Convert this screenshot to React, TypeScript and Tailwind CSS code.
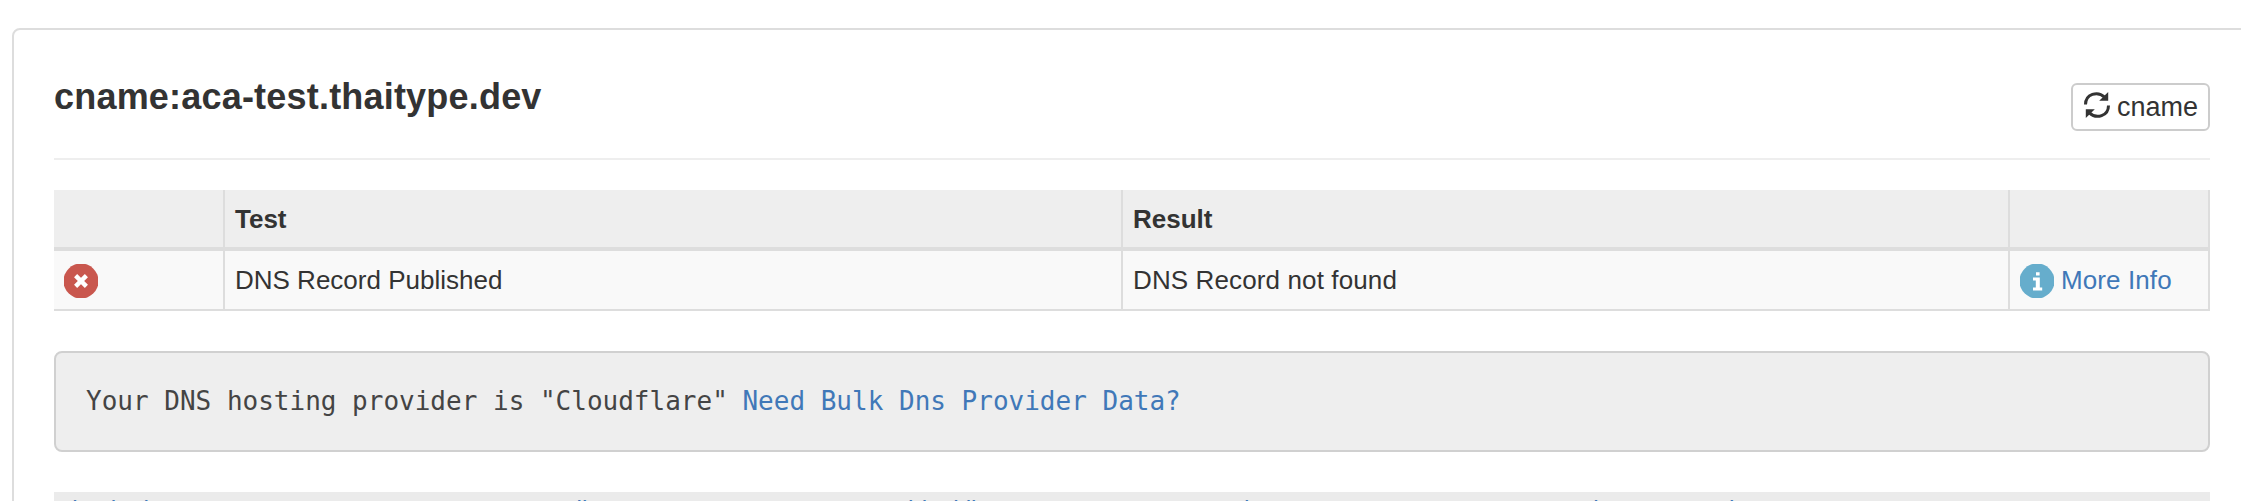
const headerCell = "border-r-2 border-b-4 border-[#ddd] bg-[#eee] pl-[10px] pt-px pb-0 text-left font-bold h-[61px]";
const bodyCell = "border-r-2 border-b-2 border-[#ddd] bg-[#f9f9f9] pl-[10px] h-[60px]";

function RefreshIcon() {
  return (
    <svg className="mb-[5px] h-[26px] w-[26px]" viewBox="0 0 26 26" fill="none">
      <path d="M1.5 12.6C1.5 2.2 13.5-1.6 20.6 5.2" stroke="#333" strokeWidth="3" />
      <path d="M24.5 13.4C24.5 23.8 12.5 27.6 5.4 20.8" stroke="#333" strokeWidth="3" />
      <path d="M24.2 0V8.8H15.2ZM1.8 26V17.2H10.8Z" fill="#333" />
    </svg>
  );
}

function ErrorIcon() {
  return (
    <svg className="relative top-px h-[34px] w-[34px]" viewBox="0 0 34 34">
      <circle cx="17" cy="17" r="17.5" fill="#c9574e" />
      <path d="M11.6 11.6L22.4 22.4M22.4 11.6L11.6 22.4" stroke="#fff" strokeWidth="4.4" />
    </svg>
  );
}

function InfoIcon() {
  return (
    <svg className="relative top-px h-[34px] w-[34px]" viewBox="0 0 34 34">
      <circle cx="17" cy="17" r="17.5" fill="#66adcc" />
      <path d="M16 8.2h3.6v3.2H16ZM13 13.6h6.8v9.8h2.4v3H13v-3h2.8v-6.8H13Z" fill="#fff" />
    </svg>
  );
}

const links = ["dns lookup", "smtp diag", "blacklist", "http test", "dns propagation"];

export default function App() {
  return (
    <div className="h-[501px] w-[2241px] overflow-hidden bg-white pl-3 pt-7 font-['Liberation_Sans',Arial,sans-serif] text-[26px] leading-[36px] text-[#333]">
      <main className="h-[600px] w-[2300px] rounded-[8px] border-2 border-[#ddd] pl-10">
        <div className="w-[2156px]">
          <header className="flex h-[130px] justify-between border-b-2 border-[#eee]">
            <h1 className="mt-[47px] text-[36px] font-bold leading-[40px] tracking-[0.2px]">cname:aca-test.thaitype.dev</h1>
            <button className="mt-[53px] flex h-12 w-[139px] items-center rounded-[6px] border-2 border-[#ccc] bg-white pl-[11px]">
              <RefreshIcon />
              <span className="ml-[7px] text-[27px]">cname</span>
            </button>
          </header>
          <table className="mt-[30px] w-full table-fixed border-separate border-spacing-0">
            <colgroup>
              <col className="w-[171px]" />
              <col className="w-[898px]" />
              <col className="w-[887px]" />
              <col className="w-[200px]" />
            </colgroup>
            <thead>
              <tr>
                <th className={headerCell} />
                <th className={headerCell}>Test</th>
                <th className={headerCell}>Result</th>
                <th className={headerCell} />
              </tr>
            </thead>
            <tbody>
              <tr>
                <td className={bodyCell}><ErrorIcon /></td>
                <td className={bodyCell}>DNS Record Published</td>
                <td className={`${bodyCell} tracking-[0.12px]`}>DNS Record not found</td>
                <td className={bodyCell}>
                  <a className="flex items-center gap-[7px] tracking-[0.1px] text-[#4078b8]"><InfoIcon />More Info</a>
                </td>
              </tr>
            </tbody>
          </table>
          <pre className="mt-10 flex h-[101px] items-center rounded-[8px] border-2 border-[#d0d0d0] bg-[#eee] pb-[2px] pl-[30px] font-['DejaVu_Sans_Mono',monospace] text-[#444]">
            {'Your DNS hosting provider is "Cloudflare" '}<a className="-ml-px text-[#4078b8]">Need Bulk Dns Provider Data?</a>
          </pre>
          <footer className="mt-10 grid h-[60px] grid-cols-[444px_400px_336px_341px_1fr] bg-[#ebebeb] pl-[10px] text-[24.7px] text-[#4078b8]">
            {links.map((label) => <a key={label}>{label}</a>)}
          </footer>
        </div>
      </main>
    </div>
  );
}
